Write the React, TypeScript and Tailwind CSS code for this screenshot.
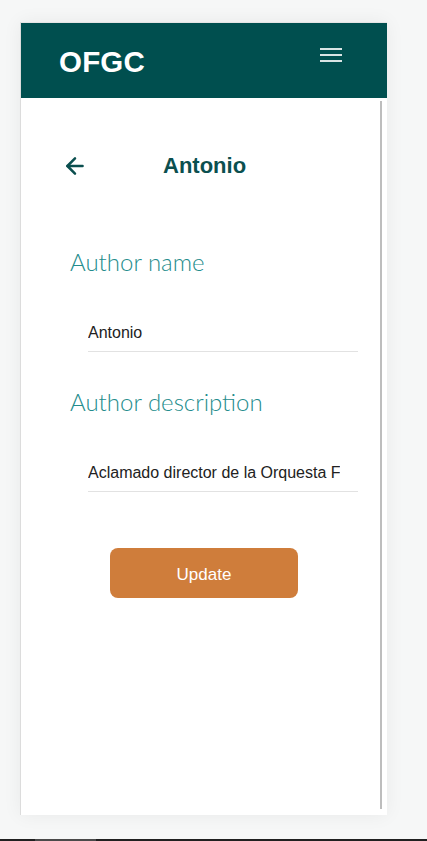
import { ArrowLeft } from "lucide-react";

function Field({ label, value }: { label: string; value: string }) {
  return (
    <div className="flex flex-col">
      <label className="pl-[49px] font-['Lato',sans-serif] text-[24px] leading-[30px] font-light text-[#248c8c]">
        {label}
      </label>
      <input
        readOnly
        value={value}
        className="mt-[45px] ml-[67px] mr-[22px] border-b border-[#e2e2e2] pb-[7px] pr-[18px] font-['Liberation_Sans',Arial,sans-serif] text-[16px] leading-[22px] text-[#222] outline-none"
      />
    </div>
  );
}

export default function App() {
  return (
    <div className="relative flex h-[841px] w-full flex-col bg-[#f6f7f7]">
      <div className="ml-[20px] mt-[22px] flex h-[793px] w-[367px] flex-col border-l border-[#dcdcdc] bg-white shadow-[0_0_18px_rgba(0,0,0,0.06)]">
        <header className="flex h-[76px] items-center justify-between border-t border-[#e5e5e5] bg-[#004f4f] pl-[38px] pr-[45px] pt-[3px]">
          <span className="font-['Liberation_Sans',Arial,sans-serif] text-[29.5px] font-bold tracking-[0.2px] text-white">
            OFGC
          </span>
          <div className="mb-[14px] flex w-[22px] flex-col gap-[4px]">
            <span className="h-[2px] w-full bg-[#d9e4e4]" />
            <span className="h-[2px] w-full bg-[#d9e4e4]" />
            <span className="h-[2px] w-full bg-[#d9e4e4]" />
          </div>
        </header>
        <div className="flex min-h-0 flex-1">
          <main className="flex min-w-0 flex-1 flex-col">
            <div className="mt-[51px] flex items-center pl-[41px]">
              <ArrowLeft className="h-[26px] w-[26px] text-[#0b4f4f]" strokeWidth={2.3} />
              <h1 className="ml-[75px] font-['Liberation_Sans',Arial,sans-serif] text-[22px] font-bold text-[#0b4f4f]">
                Antonio
              </h1>
            </div>
            <div className="mt-[65px] flex flex-col gap-[35px]">
              <Field label="Author name" value="Antonio" />
              <Field label="Author description" value="Aclamado director de la Orquesta Filarmónica" />
            </div>
            <div className="mt-[56px] pl-[89px]">
              <button className="h-[50px] w-[188px] rounded-[8px] bg-[#cf7d3b] pt-[3px] font-['Liberation_Sans',Arial,sans-serif] text-[17px] text-white">
                Update
              </button>
            </div>
          </main>
          <div className="mb-[6px] mr-[5px] mt-[3px] w-[2px] shrink-0 bg-[#bdbdbd]" />
        </div>
      </div>
      <div className="absolute bottom-0 left-0 flex h-[2px] w-full bg-[#202020]">
        <div className="ml-[35px] h-full w-[61px] bg-[#4a4a4a]" />
      </div>
    </div>
  );
}
